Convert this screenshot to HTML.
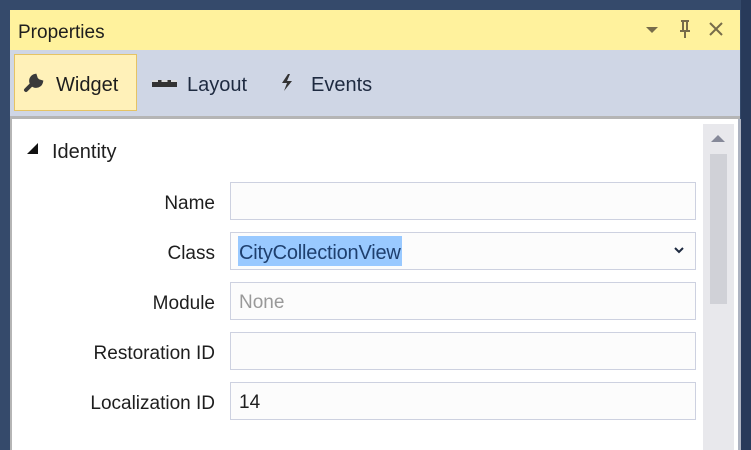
<!DOCTYPE html><html><head><style>
body{margin:0;width:751px;height:450px;background:#354a6b;position:relative;overflow:hidden;font-family:"Liberation Sans",sans-serif;}
.a{position:absolute}
.lab{position:absolute;right:536px;font-size:19px;color:#1e1e1e;line-height:38px;margin-top:3px}
.f{position:absolute;left:230px;width:464px;height:36px;border:1px solid #cdd1e0;background:#fcfcfc;font-size:19px;line-height:40px;box-sizing:content-box}
</style></head><body>
<div class="a" style="left:741px;top:0;width:10px;height:450px;background:#283a5a"></div>
<div class="a" style="left:10px;top:10px;width:730px;height:40px;background:#fff29d"></div>
<div class="a" style="left:18px;top:22px;font-size:19px;color:#1e1e1e">Properties</div>
<div class="a" style="left:646px;top:27px;width:0;height:0;border-left:6px solid transparent;border-right:6px solid transparent;border-top:6px solid #776c4a"></div>
<svg class="a" style="left:678px;top:20px" width="14" height="20"><path d="M3 1h8M5 1v10M9 1v10M2 11h10M7 11v7" stroke="#776c4a" stroke-width="2" fill="none"/></svg>
<svg class="a" style="left:708px;top:21px" width="16" height="16"><path d="M2 2L14 14M14 2L2 14" stroke="#776c4a" stroke-width="2"/></svg>
<div class="a" style="left:10px;top:50px;width:730px;height:66px;background:#cfd6e5"></div>
<div class="a" style="left:14px;top:54px;width:121px;height:55px;background:#fff1b9;border:1px solid #e5c365"></div>
<svg class="a" style="left:23px;top:73px" width="22" height="20"><path d="M3 17L11 9M12 3a5 5 0 1 0 6 6l-3-1-2-2z" stroke="#3a3a3a" stroke-width="4" fill="#3a3a3a" stroke-linecap="round"/></svg>
<div class="a" style="left:56px;top:74px;font-size:20px;color:#1e1e1e">Widget</div>
<div class="a" style="left:152px;top:80px;width:25px;height:7px;background:#333;border-top:2px dashed #ddd;box-sizing:border-box"></div>
<div class="a" style="left:187px;top:74px;font-size:20px;color:#1e2a40">Layout</div>
<svg class="a" style="left:279px;top:73px" width="16" height="20"><path d="M9 1L3 10h5l-3 8 8-10H8l3-7z" fill="#333"/></svg>
<div class="a" style="left:311px;top:74px;font-size:20px;color:#1e2a40">Events</div>
<div class="a" style="left:10px;top:116px;width:730px;height:3px;background:#b5b5b5"></div>
<div class="a" style="left:10px;top:119px;width:2px;height:331px;background:#b5b5b5"></div>
<div class="a" style="left:12px;top:119px;width:726px;height:331px;background:#fff"></div>
<div class="a" style="left:738px;top:119px;width:3px;height:331px;background:#aeb4c2"></div>
<div class="a" style="left:703px;top:124px;width:31px;height:326px;background:#e8e8ec"></div>
<div class="a" style="left:710px;top:154px;width:17px;height:150px;background:#d0d1d7"></div>
<div class="a" style="left:711px;top:135px;width:0;height:0;border-left:7px solid transparent;border-right:7px solid transparent;border-bottom:7px solid #868999"></div>
<div class="a" style="left:27px;top:143px;width:0;height:0;border-left:11px solid transparent;border-bottom:11px solid #111"></div>
<div class="a" style="left:52px;top:141px;font-size:20px;color:#1e1e1e">Identity</div>
<div class="lab" style="top:182px">Name</div><div class="f" style="top:182px"></div>
<div class="lab" style="top:232px">Class</div><div class="f" style="top:232px"><span style="position:absolute;left:7px;top:3px;height:30px;line-height:34px;background:#99c9ff;color:#1e3f6e;padding:0 1px;font-size:20px;letter-spacing:-0.2px">CityCollectionView</span>
<svg style="position:absolute;left:442px;top:13px" width="12" height="10"><path d="M2 2l4 4 4-4" stroke="#1e2a40" stroke-width="2" fill="none"/></svg></div>
<div class="lab" style="top:282px">Module</div><div class="f" style="top:282px;color:#999"><span style="margin-left:8px">None</span></div>
<div class="lab" style="top:332px">Restoration ID</div><div class="f" style="top:332px"></div>
<div class="lab" style="top:382px">Localization ID</div><div class="f" style="top:382px;color:#1e1e1e"><span style="margin-left:8px">14</span></div>
</body></html>
